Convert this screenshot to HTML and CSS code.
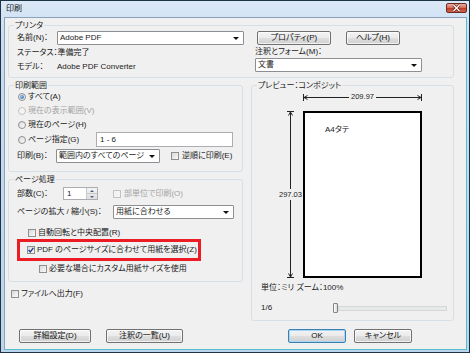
FILE: index.html
```html
<!DOCTYPE html>
<html lang="ja">
<head>
    <meta charset="UTF-8">
    <meta name="viewport" content="width=device-width, initial-scale=1.0">
    <title>印刷</title>
    <link rel="stylesheet" href="styles.css">
</head>
<body>
    <div class="window">
        <div class="titlebar">
            <span class="title">印刷</span>
            <button class="close-btn">
                <svg width="19" height="8" viewBox="0 0 19 8"><path d="M6.5 1 L12.5 7 M12.5 1 L6.5 7" stroke="#5a1a10" stroke-width="2.6"/><path d="M6.5 1 L12.5 7 M12.5 1 L6.5 7" stroke="#fff" stroke-width="1.4"/></svg>
            </button>
        </div>
        <div class="client">
            <fieldset class="group printer-group">
                <legend>プリンタ</legend>
                <div class="printer-body">
                    <div class="printer-left">
                        <div class="field-row">
                            <span class="name-label">名前(N)：</span>
                            <div class="combo printer-combo"><span>Adobe PDF</span><i class="arrow"></i></div>
                        </div>
                        <div class="info-row">ステータス：準備完了</div>
                        <div class="info-row"><span class="name-label">モデル：</span>Adobe PDF Converter</div>
                    </div>
                    <div class="printer-right">
                        <div class="field-row btn-row">
                            <button class="btn btn-props">プロパティ(P)</button>
                            <button class="btn btn-help">ヘルプ(H)</button>
                        </div>
                        <div class="info-row annot-label">注釈とフォーム(M)：</div>
                        <div class="combo annot-combo"><span>文書</span><i class="arrow"></i></div>
                    </div>
                </div>
            </fieldset>

            <div class="columns">
                <div class="left-col">
                    <fieldset class="group range-group">
                        <legend>印刷範囲</legend>
                        <div class="group-body range-body">
                            <div class="opt-row"><i class="radio checked"></i><span>すべて(A)</span></div>
                            <div class="opt-row disabled"><i class="radio"></i><span>現在の表示範囲(V)</span></div>
                            <div class="opt-row"><i class="radio"></i><span>現在のページ(H)</span></div>
                            <div class="opt-row pages-row">
                                <i class="radio"></i><span>ページ指定(G)</span>
                                <div class="textbox page-input">1 - 6</div>
                            </div>
                            <div class="field-row print-row">
                                <span class="print-label">印刷(B)：</span>
                                <div class="combo subset-combo"><span>範囲内のすべてのページ</span><i class="arrow"></i></div>
                                <i class="check reverse-check"></i><span>逆順に印刷(E)</span>
                            </div>
                        </div>
                    </fieldset>

                    <fieldset class="group handling-group">
                        <legend>ページ処理</legend>
                        <div class="group-body handling-body">
                            <div class="field-row copies-row">
                                <span class="copies-label">部数(C)：</span>
                                <div class="spin">
                                    <span class="spin-val">1</span>
                                    <span class="spin-btns"><i class="up"></i><i class="down"></i></span>
                                </div>
                                <i class="check disabled collate-check"></i><span class="muted">部単位で印刷(O)</span>
                            </div>
                            <div class="field-row scale-row">
                                <span class="scale-label">ページの拡大 / 縮小(S)：</span>
                                <div class="combo scale-combo"><span>用紙に合わせる</span><i class="arrow"></i></div>
                            </div>
                            <div class="opt-row auto-rotate"><i class="check"></i><span>自動回転と中央配置(R)</span></div>
                            <div class="highlight">
                                <div class="opt-row"><i class="check checked"><svg width="6" height="6" viewBox="0 0 6 6"><path d="M0.6 3 L2.3 4.9 L5.4 0.8" fill="none" stroke="#1d3f86" stroke-width="1.4"/></svg></i><span>PDF のページサイズに合わせて用紙を選択(Z)</span></div>
                            </div>
                            <div class="opt-row custom-size"><i class="check"></i><span>必要な場合にカスタム用紙サイズを使用</span></div>
                        </div>
                    </fieldset>

                    <div class="opt-row to-file"><i class="check"></i><span>ファイルへ出力(F)</span></div>
                </div>

                <div class="right-col">
                    <fieldset class="group preview-group">
                        <legend>プレビュー：コンポジット</legend>
                        <div class="diagram">
                            <div class="hdim">
                                <svg width="5" height="7" viewBox="0 0 5 7"><path d="M0.5 0 V7 M4.5 1.5 L1 3.5 L4.5 5.5 M1 3.5 H5" fill="none" stroke="#222" stroke-width="1"/></svg>
                                <div class="hline"></div>
                                <span class="dim-text">209.97</span>
                                <div class="hline"></div>
                                <svg width="5" height="7" viewBox="0 0 5 7"><path d="M4.5 0 V7 M0.5 1.5 L4 3.5 L0.5 5.5 M0 3.5 H4" fill="none" stroke="#222" stroke-width="1"/></svg>
                            </div>
                            <div class="diagram-body">
                                <div class="vdim">
                                    <svg width="7" height="5" viewBox="0 0 7 5"><path d="M0 0.5 H7 M1.5 4.5 L3.5 1 L5.5 4.5 M3.5 1 V5" fill="none" stroke="#222" stroke-width="1"/></svg>
                                    <div class="vline"></div>
                                    <span class="dim-text">297.03</span>
                                    <div class="vline"></div>
                                    <svg width="7" height="5" viewBox="0 0 7 5"><path d="M0 4.5 H7 M1.5 0.5 L3.5 4 L5.5 0.5 M3.5 0 V4" fill="none" stroke="#222" stroke-width="1"/></svg>
                                </div>
                                <div class="page"><span>A4タテ</span></div>
                            </div>
                        </div>
                        <div class="unit-row">単位：ミリ ズーム：100%</div>
                        <div class="slider-row">
                            <span class="page-count">1/6</span>
                            <div class="slider"><i class="thumb"></i><div class="track"></div></div>
                        </div>
                    </fieldset>
                </div>
            </div>

            <div class="button-bar">
                <div class="btn-group">
                    <button class="btn btn-advanced">詳細設定(D)</button>
                    <button class="btn btn-summary">注釈の一覧(U)</button>
                </div>
                <div class="btn-group dialog-btns">
                    <button class="btn btn-ok">OK</button>
                    <button class="btn btn-cancel">キャンセル</button>
                </div>
            </div>
        </div>
    </div>
</body>
</html>
```

FILE: styles.css
```css
* {
    box-sizing: border-box;
}
body {
    margin: 0;
    font-family: "Liberation Sans", "Noto Sans CJK JP", sans-serif;
    font-size: 8px;
    line-height: 1;
    color: #1a1a1a;
    font-feature-settings: "palt";
    background: #fff;
}
.window {
    width: 470px;
    height: 353px;
    border: 1px solid #1f3347;
    border-right-color: #173040;
    background: linear-gradient(#dbe8f6, #c9dcf1 40px, #bcd4ec);
    padding: 0 2px 2px 3px;
    display: flex;
    flex-direction: column;
}
.titlebar {
    height: 16px;
    display: flex;
    align-items: center;
    justify-content: space-between;
}
.title {
    margin-left: 2px;
    color: #101010;
}
.close-btn {
    width: 21px;
    height: 10px;
    margin: -2px 0 0 0;
    padding: 0;
    border: 1px solid #6b2a23;
    border-radius: 2px;
    background: linear-gradient(#eab0a2, #d86f5a 45%, #bf3d27 55%, #d4634a);
    display: flex;
    align-items: center;
    justify-content: center;
}
.client {
    flex: 1;
    background: #f0f0f0;
    border: 1px solid #8aa3bd;
    border-right-color: #52bfcc;
    border-bottom-color: #52bfcc;
    display: flex;
    flex-direction: column;
}

/* group boxes */
.group {
    margin: 0;
    padding: 0;
    min-width: 0;
    border: 1px solid #d5dfe5;
    border-radius: 3px;
}
.group legend {
    margin-left: 5px;
    padding: 0 1px;
    height: 9px;
    line-height: 9px;
}
.printer-group {
    width: 446px;
    margin: 3px 0 0 3px;
}
.printer-body {
    display: flex;
    padding: 1px 0 4px 8px;
}
.printer-left {
    width: 227px;
}
.printer-right {
    margin-left: 11px;
}
.field-row {
    display: flex;
    align-items: center;
    height: 14px;
}
.info-row {
    display: flex;
    align-items: center;
    height: 12px;
    margin-top: 2px;
}
.name-label {
    width: 40px;
}
.annot-label {
    margin-top: 1px;
}

/* controls */
.combo {
    height: 14px;
    border: 1px solid #8b8e93;
    border-radius: 1px;
    background: #fff;
    display: flex;
    align-items: center;
    padding-left: 2px;
}
.combo .arrow {
    margin-left: auto;
    margin-right: 4px;
    width: 0;
    height: 0;
    border-left: 3px solid transparent;
    border-right: 3px solid transparent;
    border-top: 3px solid #111;
}
.printer-combo {
    width: 187px;
}
.annot-combo {
    width: 167px;
}
.textbox {
    height: 15px;
    border: 1px solid #abadb3;
    background: #fff;
    display: flex;
    align-items: center;
    padding-left: 3px;
}
.btn {
    height: 14px;
    padding: 0;
    font: inherit;
    color: #111;
    border: 1px solid #707070;
    border-radius: 2px;
    background: linear-gradient(#f3f3f3, #ebebeb 48%, #dedede 52%, #d0d0d0);
    box-shadow: inset 0 0 0 1px rgba(255, 255, 255, 0.7);
}
.btn-row .btn-props {
    width: 74px;
    margin-left: 2px;
}
.btn-row .btn-help {
    width: 54px;
    margin-left: 15px;
}
.radio {
    width: 8px;
    height: 8px;
    border: 1px solid #8e8f8f;
    border-radius: 50%;
    background: linear-gradient(135deg, #dcdcdc, #fafafa);
    flex-shrink: 0;
    display: flex;
    align-items: center;
    justify-content: center;
}
.radio.checked::after {
    content: "";
    width: 4px;
    height: 4px;
    border-radius: 50%;
    background: radial-gradient(circle at 35% 35%, #8fc4f0, #1f5fa8);
}
.check {
    width: 8px;
    height: 8px;
    border: 1px solid #8e8f8f;
    background: linear-gradient(135deg, #d8d8d8, #fbfbfb);
    flex-shrink: 0;
    display: flex;
    align-items: center;
    justify-content: center;
}
.check.disabled {
    border-color: #c2c2c2;
    background: #f4f4f4;
}
.muted,
.disabled span {
    color: #a3a3a3;
}
.disabled .radio {
    border-color: #c2c2c2;
    background: #f4f4f4;
}
.opt-row {
    display: flex;
    align-items: center;
    height: 12px;
}
.opt-row .radio,
.opt-row .check {
    margin-right: 2px;
}

/* range group */
.columns {
    display: flex;
    gap: 8px;
    margin: 3px 0 0 3px;
}
.left-col {
    width: 235px;
}
.right-col {
    width: 203px;
}
.group-body {
    padding: 0 9px 0 9px;
}
.range-body {
    padding-bottom: 8px;
}
.range-body .opt-row {
    height: 14px;
}
.range-body .pages-row {
    height: 15px;
}
.page-input {
    margin-left: auto;
    width: 137px;
}
.print-row {
    margin-top: 2px;
}
.print-label {
    width: 39px;
    margin-left: -1px;
}
.subset-combo {
    width: 104px;
}
.reverse-check {
    margin: 0 3px 0 11px;
}

/* page handling group */
.handling-group {
    margin-top: 3px;
}
.handling-body {
    padding: 0 8px 6px 8px;
}
.copies-row {
    height: 13px;
    margin-top: 3px;
}
.copies-label {
    width: 46px;
}
.spin {
    width: 35px;
    height: 13px;
    border: 1px solid #abadb3;
    background: #fff;
    display: flex;
}
.spin-val {
    flex: 1;
    padding-left: 3px;
    display: flex;
    align-items: center;
}
.spin-btns {
    width: 11px;
    display: flex;
    flex-direction: column;
    border-left: 1px solid #c8c8c8;
    background: linear-gradient(#f4f4f4, #dedede);
}
.spin-btns i {
    flex: 1;
    display: flex;
    align-items: center;
    justify-content: center;
}
.spin-btns i::after {
    content: "";
    border-left: 2px solid transparent;
    border-right: 2px solid transparent;
}
.spin-btns .up {
    border-bottom: 1px solid #c8c8c8;
}
.spin-btns .up::after {
    border-bottom: 2px solid #4d6185;
}
.spin-btns .down::after {
    border-top: 2px solid #4d6185;
}
.collate-check {
    margin: 0 3px 0 15px;
}
.scale-row {
    margin-top: 5px;
}
.scale-label {
    width: 96px;
}
.scale-combo {
    width: 121px;
}
.auto-rotate {
    margin: 8px 0 0 11px;
}
.highlight {
    width: 184px;
    height: 22px;
    border: 3px solid #ec1c24;
    padding-left: 7px;
    display: flex;
    align-items: center;
}
.custom-size {
    margin: 2px 0 0 22px;
}
.to-file {
    margin: 6px 0 0 3px;
}

/* preview group */
.diagram {
    margin: 2px 0 0 26px;
}
.hdim {
    display: flex;
    align-items: center;
    width: 119px;
    height: 10px;
    margin-left: 25px;
}
.hline {
    flex: 1;
    height: 1px;
    background: #222;
}
.dim-text {
    padding: 0 2px;
    font-size: 7.5px;
}
.diagram-body {
    display: flex;
    margin-top: 9px;
}
.vdim {
    width: 25px;
    height: 167px;
    display: flex;
    flex-direction: column;
    align-items: center;
}
.vdim .dim-text {
    padding: 2px 0;
}
.vline {
    flex: 1;
    width: 1px;
    background: #222;
}
.page {
    width: 119px;
    height: 167px;
    border: 2px solid #000;
    background: #fff;
    padding: 13px 0 0 20px;
}
.unit-row {
    margin-top: 5px;
    padding-left: 9px;
    height: 10px;
    display: flex;
    align-items: center;
}
.slider-row {
    display: flex;
    align-items: center;
    height: 12px;
    margin-top: 9px;
    padding-left: 9px;
    margin-bottom: 6px;
}
.page-count {
    width: 72px;
}
.slider {
    display: flex;
    align-items: center;
    width: 114px;
}
.thumb {
    width: 5px;
    height: 10px;
    border: 1px solid #858585;
    border-radius: 1px;
    background: linear-gradient(90deg, #fdfdfd, #d9d9d9);
}
.track {
    flex: 1;
    height: 5px;
    border: 1px solid #d6d6d6;
    background: #e7eaea;
}

/* bottom buttons */
.button-bar {
    display: flex;
    justify-content: space-between;
    margin-top: 8px;
}
.btn-group {
    display: flex;
    gap: 15px;
    margin-left: 14px;
}
.btn-advanced {
    width: 72px;
}
.btn-summary {
    width: 77px;
}
.dialog-btns {
    gap: 8px;
    margin: 0 54px 0 0;
}
.btn-ok,
.btn-cancel {
    width: 58px;
}
.btn-ok {
    border-color: #3c7fb1;
    box-shadow: inset 0 0 0 1px #a6d6f4;
}
```
